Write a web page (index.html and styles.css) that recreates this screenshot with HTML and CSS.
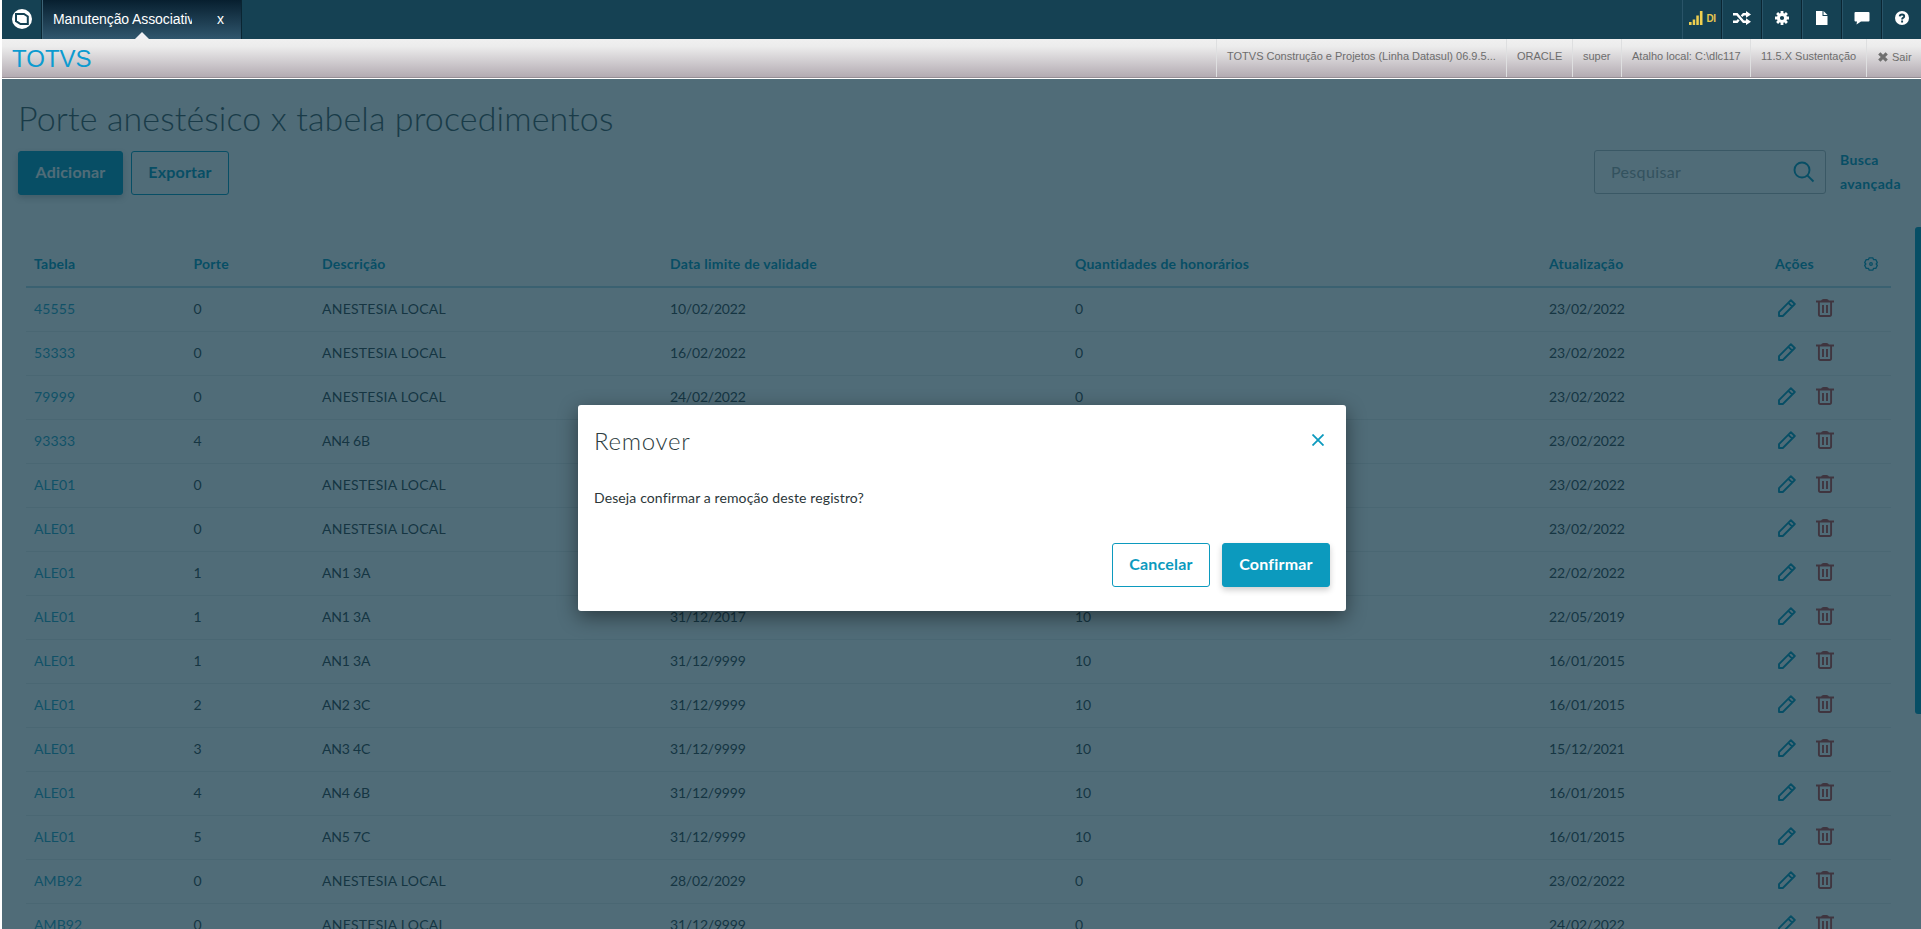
FILE: index.html
```
<!DOCTYPE html>
<html lang="pt-br">
<head>
	<meta charset="UTF-8">
	<title>Porte anestésico x tabela procedimentos</title>
	<link rel="stylesheet" href="styles.css">
</head>
<body>
<!-- icons -->
<svg class="symbols">
	<symbol id="edit" viewBox="0 0 18 18"><path d="M1 17V13.2L12.9 1.2L16.8 5L4.8 17ZM10.4 3.8L14.2 7.6" fill="none" stroke="currentColor" stroke-width="1.900" stroke-linejoin="round"/></symbol>
	<symbol id="trash" viewBox="0 0 18 18"><path d="M0 2.500H18" fill="none" stroke="currentColor" stroke-width="2"/><path d="M5 2Q5.500 0 7.500 0H10.500Q12.500 0 13 2Z" fill="currentColor"/><path d="M2.900 2V15.500Q2.900 17 4.500 17H13.500Q15.100 17 15.100 15.500V2M7 6V14M11 6V14" fill="none" stroke="currentColor" stroke-width="1.900"/></symbol>
</svg>

<div class="topbar">
	<div class="logo">
		<svg width="20" height="20" viewBox="0 0 20 20"><circle cx="10" cy="10" r="10" fill="#fff"/><path d="M4 5H12L15.800 7.500V15H8.500L4 12.200Z" fill="none" stroke="#154153" stroke-width="2"/></svg>
	</div>
	<div class="tab">
		<span class="tab-text">Manutenção Associativa</span>
		<span class="tab-close">x</span>
	</div>
	<ul class="tools">
		<li class="signal">
			<svg width="14" height="14" viewBox="0 0 14 14"><path d="M0 11H2.600V14H0ZM3.700 8.500H6.200V14H3.700ZM7.300 4.500H9.800V14H7.300ZM10.900 0H13.500V14H10.900Z" fill="#f0d050"/></svg>
			<span>DI</span>
		</li>
		<li><svg width="18" height="14" viewBox="0 0 18 14"><path d="M0 3.200H4L10.500 10.800H14M0 10.800H4L5.700 8.800M8.600 5.300L10.500 3.200H14" fill="none" stroke="#fff" stroke-width="2.400"/><path d="M13 0L18 3.400L13 6.700ZM13 7.300L18 10.700L13 14Z" fill="#fff"/></svg></li>
		<li><svg width="14" height="14" viewBox="0 0 14 14"><circle cx="7" cy="7" r="3.600" fill="none" stroke="#fff" stroke-width="3"/><path d="M7 0V3M7 11V14M0 7H3M11 7H14M2.100 2.100L4.200 4.200M9.800 9.800L11.900 11.900M11.900 2.100L9.800 4.200M4.200 9.800L2.100 11.900" stroke="#fff" stroke-width="2.800"/></svg></li>
		<li><svg width="12" height="14" viewBox="0 0 12 14"><path d="M0 0H6.500V5H11.500V14H0Z" fill="#fff"/><path d="M7.500 0L11.500 4H7.500Z" fill="#fff"/></svg></li>
		<li><svg width="16" height="14" viewBox="0 0 16 14"><path d="M1.500 1H14.500Q15.500 1 15.500 2V9.500Q15.500 10.500 14.500 10.500H7L2.500 13.500L3 10.500H1.500Q.5 10.500 .5 9.500V2Q.5 1 1.500 1Z" fill="#fff"/></svg></li>
		<li><svg width="14" height="14" viewBox="0 0 14 14"><circle cx="7" cy="7" r="7" fill="#fff"/><path d="M4.700 5.300Q4.900 3.500 7 3.500Q9.200 3.500 9.200 5.200Q9.200 6.200 8 6.900Q7.100 7.400 7.100 8.600M7.100 9.600V11.500" fill="none" stroke="#154153" stroke-width="1.900"/></svg></li>
	</ul>
</div>

<div class="infobar">
	<span class="brand">TOTVS</span>
	<ul class="info">
		<li class="w-product">TOTVS Construção e Projetos (Linha Datasul) 06.9.5...</li>
		<li class="w-db">ORACLE</li>
		<li class="w-user">super</li>
		<li class="w-path">Atalho local: C:\dlc117</li>
		<li class="w-version">11.5.X Sustentação</li>
		<li class="exit"><svg width="10" height="10" viewBox="0 0 10 10"><path d="M1.300 1.300L8.700 8.700M8.700 1.300L1.300 8.700" stroke="#6f6f6f" stroke-width="3.200"/></svg>Sair</li>
	</ul>
</div>

<div class="page">
	<h1 class="title">Porte anestésico x tabela procedimentos</h1>
	<div class="actions">
		<button class="btn primary add">Adicionar</button>
		<button class="btn export">Exportar</button>
		<div class="search">
			<span>Pesquisar</span>
			<svg width="22" height="22" viewBox="0 0 22 22"><circle cx="9" cy="9" r="7.500" fill="none" stroke="#0c9abe" stroke-width="1.900"/><path d="M14.300 14.300L20.500 20.500" stroke="#0c9abe" stroke-width="1.900"/></svg>
		</div>
		<a class="advanced">Busca<br>avançada</a>
	</div>

	<table class="table">
		<colgroup><col class="c1"><col class="c2"><col class="c3"><col class="c4"><col class="c5"><col class="c6"><col class="c7"><col></colgroup>
		<thead>
			<tr><th>Tabela</th><th>Porte</th><th>Descrição</th><th>Data limite de validade</th><th>Quantidades de honorários</th><th>Atualização</th><th>Ações</th><th class="gear"><svg width="14" height="14" viewBox="0 0 14 14"><path d="M5.200 .8H8.800L9.600 2.700L11.800 2.600L13.300 5.500L12.200 7L13.300 8.500L11.800 11.400L9.600 11.300L8.800 13.200H5.200L4.400 11.300L2.200 11.400L.7 8.500L1.800 7L.7 5.500L2.200 2.600L4.400 2.700Z" fill="none" stroke="#0c9abe" stroke-width="1.300" stroke-linejoin="round"/><circle cx="7" cy="7" r="1.300" fill="none" stroke="#0c9abe" stroke-width="1.300"/></svg></th></tr>
		</thead>
		<tbody>
			<tr><td><a>45555</a></td><td>0</td><td class="desc">ANESTESIA LOCAL</td><td>10/02/2022</td><td>0</td><td>23/02/2022</td><td colspan="2"><div class="icons"><svg class="edit"><use href="#edit"/></svg><svg class="trash"><use href="#trash"/></svg></div></td></tr>
			<tr><td><a>53333</a></td><td>0</td><td class="desc">ANESTESIA LOCAL</td><td>16/02/2022</td><td>0</td><td>23/02/2022</td><td colspan="2"><div class="icons"><svg class="edit"><use href="#edit"/></svg><svg class="trash"><use href="#trash"/></svg></div></td></tr>
			<tr><td><a>79999</a></td><td>0</td><td class="desc">ANESTESIA LOCAL</td><td>24/02/2022</td><td>0</td><td>23/02/2022</td><td colspan="2"><div class="icons"><svg class="edit"><use href="#edit"/></svg><svg class="trash"><use href="#trash"/></svg></div></td></tr>
			<tr><td><a>93333</a></td><td>4</td><td>AN4 6B</td><td></td><td></td><td>23/02/2022</td><td colspan="2"><div class="icons"><svg class="edit"><use href="#edit"/></svg><svg class="trash"><use href="#trash"/></svg></div></td></tr>
			<tr><td><a>ALE01</a></td><td>0</td><td class="desc">ANESTESIA LOCAL</td><td></td><td></td><td>23/02/2022</td><td colspan="2"><div class="icons"><svg class="edit"><use href="#edit"/></svg><svg class="trash"><use href="#trash"/></svg></div></td></tr>
			<tr><td><a>ALE01</a></td><td>0</td><td class="desc">ANESTESIA LOCAL</td><td></td><td></td><td>23/02/2022</td><td colspan="2"><div class="icons"><svg class="edit"><use href="#edit"/></svg><svg class="trash"><use href="#trash"/></svg></div></td></tr>
			<tr><td><a>ALE01</a></td><td>1</td><td>AN1 3A</td><td></td><td></td><td>22/02/2022</td><td colspan="2"><div class="icons"><svg class="edit"><use href="#edit"/></svg><svg class="trash"><use href="#trash"/></svg></div></td></tr>
			<tr><td><a>ALE01</a></td><td>1</td><td>AN1 3A</td><td>31/12/2017</td><td>10</td><td>22/05/2019</td><td colspan="2"><div class="icons"><svg class="edit"><use href="#edit"/></svg><svg class="trash"><use href="#trash"/></svg></div></td></tr>
			<tr><td><a>ALE01</a></td><td>1</td><td>AN1 3A</td><td>31/12/9999</td><td>10</td><td>16/01/2015</td><td colspan="2"><div class="icons"><svg class="edit"><use href="#edit"/></svg><svg class="trash"><use href="#trash"/></svg></div></td></tr>
			<tr><td><a>ALE01</a></td><td>2</td><td>AN2 3C</td><td>31/12/9999</td><td>10</td><td>16/01/2015</td><td colspan="2"><div class="icons"><svg class="edit"><use href="#edit"/></svg><svg class="trash"><use href="#trash"/></svg></div></td></tr>
			<tr><td><a>ALE01</a></td><td>3</td><td>AN3 4C</td><td>31/12/9999</td><td>10</td><td>15/12/2021</td><td colspan="2"><div class="icons"><svg class="edit"><use href="#edit"/></svg><svg class="trash"><use href="#trash"/></svg></div></td></tr>
			<tr><td><a>ALE01</a></td><td>4</td><td>AN4 6B</td><td>31/12/9999</td><td>10</td><td>16/01/2015</td><td colspan="2"><div class="icons"><svg class="edit"><use href="#edit"/></svg><svg class="trash"><use href="#trash"/></svg></div></td></tr>
			<tr><td><a>ALE01</a></td><td>5</td><td>AN5 7C</td><td>31/12/9999</td><td>10</td><td>16/01/2015</td><td colspan="2"><div class="icons"><svg class="edit"><use href="#edit"/></svg><svg class="trash"><use href="#trash"/></svg></div></td></tr>
			<tr><td><a>AMB92</a></td><td>0</td><td class="desc">ANESTESIA LOCAL</td><td>28/02/2029</td><td>0</td><td>23/02/2022</td><td colspan="2"><div class="icons"><svg class="edit"><use href="#edit"/></svg><svg class="trash"><use href="#trash"/></svg></div></td></tr>
			<tr><td><a>AMB92</a></td><td>0</td><td class="desc">ANESTESIA LOCAL</td><td>31/12/9999</td><td>0</td><td>24/02/2022</td><td colspan="2"><div class="icons"><svg class="edit"><use href="#edit"/></svg><svg class="trash"><use href="#trash"/></svg></div></td></tr>
		</tbody>
	</table>
	<div class="scroll"></div>

	<div class="overlay">
		<div class="modal">
			<div class="modal-head">
				<h2>Remover</h2>
				<svg width="12" height="12" viewBox="0 0 12 12"><path d="M.5 .5L11.500 11.500M11.500 .5L.5 11.500" stroke="#0c9abe" stroke-width="1.800"/></svg>
			</div>
			<p class="modal-text">Deseja confirmar a remoção deste registro?</p>
			<div class="modal-foot">
				<button class="btn cancel">Cancelar</button>
				<button class="btn primary confirm">Confirmar</button>
			</div>
		</div>
	</div>
</div>
</body>
</html>
```
FILE: styles.css
```
*{
	box-sizing:border-box;
}
body{
	margin:0;
	padding-left:2px;
	height:929px;
	overflow:hidden;
	background:#fff;
	font-family:Lato,sans-serif;
}
ul{
	list-style:none;
	margin:0;
	padding:0;
}
.symbols{
	display:none;
}
/* top bar */
.topbar{
	display:flex;
	height:39px;
	background:#154153;
	font-family:"Liberation Sans",sans-serif;
}
.logo{
	width:40px;
	padding:9px 0 0 10px;
	border-right:1px solid #0a2532;
}
.tab{
	position:relative;
	display:flex;
	width:200px;
	padding:11px 0 0 10px;
	border-left:1px solid #3d6376;
	border-right:1px solid #0a2532;
	background:linear-gradient(#071f2f,#30566d);
	color:#fff;
	font-size:14px;
	line-height:17px;
}
.tab:after{
	content:"";
	position:absolute;
	left:92px;
	bottom:0;
	border:7px solid transparent;
	border-top:0;
	border-bottom-color:#f0f0f4;
}
.tab-text{
	width:139px;
	overflow:hidden;
	white-space:nowrap;
	letter-spacing:-.1px;
}
.tab-close{
	margin-left:25px;
}
.tools{
	display:flex;
	margin-left:auto;
}
.tools li{
	display:flex;
	justify-content:center;
	align-items:center;
	width:40px;
	height:39px;
	padding-bottom:3px;
	border-left:1px solid #2a5468;
	border-right:1px solid #0a2532;
}
.tools li:last-child{
	width:39px;
	border-right:0;
}
.tools .signal{
	color:#e3c650;
	font-size:10px;
	font-weight:bold;
	gap:4px;
	letter-spacing:-.5px;
}
/* info bar */
.infobar{
	display:flex;
	height:39px;
	background:linear-gradient(#f0f0f0,#ececec 20%,#b3abb2);
	border-bottom:1px solid #958d94;
	font-family:"Liberation Sans",sans-serif;
}
.brand{
	margin:6px 0 0 10px;
	color:#0c9bd0;
	font-size:24px;
	line-height:28px;
}
.info{
	display:flex;
	margin-left:auto;
}
.info li{
	padding:10px 0 0 10px;
	border-left:1px solid #dedfe0;
	color:#6d6d6d;
	font-size:11px;
	line-height:14px;
	white-space:nowrap;
}
.w-product{
	width:290px;
}
.w-db{
	width:66px;
}
.w-user{
	width:49px;
}
.w-path{
	width:129px;
}
.w-version{
	width:116px;
}
.info .exit{
	width:55px;
	padding-top:11px;
}
.exit svg{
	margin:0 4px -1px 1px;
}
/* page */
.page{
	position:relative;
	height:850px;
	margin-top:1px;
	padding:17px 20px 0 16px;
	overflow:hidden;
	background:#fdfdfd;
}
.title{
	margin:0;
	height:55px;
	color:#4a5c60;
	font-size:34px;
	font-weight:300;
	line-height:43px;
	letter-spacing:.12px;
}
.actions{
	display:flex;
	height:44px;
}
.btn{
	height:44px;
	padding:0 0 3px;
	border:1px solid #0c9abe;
	border-radius:3px;
	background:transparent;
	color:#0c9abe;
	font-family:Lato,sans-serif;
	font-size:16px;
	font-weight:bold;
	letter-spacing:.2px;
}
.primary{
	background:#0c9abe;
	color:#fff;
	box-shadow:0 3px 6px rgba(0,0,0,.2);
}
.add{
	width:105px;
}
.export{
	width:98px;
	margin-left:8px;
}
.search{
	display:flex;
	justify-content:space-between;
	align-items:center;
	width:232px;
	height:44px;
	margin:-1px 14px 0 auto;
	padding:0 10px 1px 16px;
	border:1px solid #b6bdbf;
	border-radius:3px;
	color:#9da7a9;
	font-size:16px;
	letter-spacing:.35px;
}
.advanced{
	width:61px;
	margin-right:0;
	color:#0c9abe;
	font-size:14px;
	font-weight:bold;
	line-height:24px;
	letter-spacing:.35px;
	margin-top:-3px;
}
.table{
	width:1865px;
	margin:48px 0 0 8px;
	table-layout:fixed;
	border-collapse:separate;
	border-spacing:0;
	background:#fff;
	color:#3c494c;
	font-size:14px;
}
.c1{
	width:159.5px;
}
.c2{
	width:128.5px;
}
.c3{
	width:348px;
}
.c4{
	width:405px;
}
.c5{
	width:474px;
}
.c6{
	width:226px;
}
.c7{
	width:84px;
}
th{
	height:45px;
	padding:0 8px 2px;
	border-bottom:2px solid #b6dbe6;
	color:#0c9abe;
	text-align:left;
	letter-spacing:.22px;
}
td{
	height:44px;
	padding:0 8px 3px;
	border-bottom:1px solid #eceeee;
	letter-spacing:-.2px;
}
.desc{
	letter-spacing:.25px;
}
td a{
	color:#2ea6c6;
	letter-spacing:.1px;
}
.gear svg{
	display:block;
	margin-left:5px;
}
.icons{
	display:flex;
	gap:20px;
	padding-left:3px;
}
.icons svg{
	width:18px;
	height:18px;
}
.edit{
	color:#0c9abe;
}
.trash{
	color:#c64840;
}
.scroll{
	position:absolute;
	right:0;
	top:148px;
	width:6px;
	height:487px;
	border-radius:3px 0 0 3px;
	background:#0c9abe;
}
/* modal */
.overlay{
	position:absolute;
	left:0;
	top:0;
	right:0;
	bottom:0;
	padding:326px 0 0 576px;
	background:rgba(5,45,62,.7);
}
.modal{
	width:768px;
	height:206px;
	padding:16px;
	border-radius:3px;
	background:#fff;
	box-shadow:0 6px 20px rgba(0,0,0,.45);
}
.modal-head{
	display:flex;
	justify-content:space-between;
	padding-right:6px;
}
.modal-head h2{
	margin:4px 0 1px;
	color:#2c3c40;
	font-size:24px;
	font-weight:300;
	line-height:32px;
	letter-spacing:.7px;
}
.modal-head svg{
	margin-top:13px;
}
.modal-text{
	margin:29px 0 34px;
	height:22px;
	color:#2c3739;
	font-size:14px;
	line-height:22px;
	letter-spacing:.12px;
}
.modal-foot{
	display:flex;
	justify-content:flex-end;
	gap:12px;
}
.cancel{
	width:98px;
}
.confirm{
	width:108px;
}
```
